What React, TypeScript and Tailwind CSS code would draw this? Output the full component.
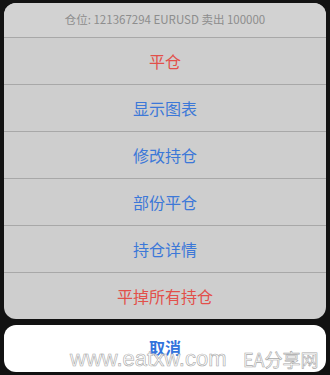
import React from "react";

const actions = [
  { label: "平仓", danger: true },
  { label: "显示图表" },
  { label: "修改持仓" },
  { label: "部份平仓" },
  { label: "持仓详情" },
  { label: "平掉所有持仓", danger: true },
];

export default function App() {
  return (
    <div className="relative h-[375px] w-[330px] overflow-hidden bg-[#121212] px-[4px] pt-[3px] font-['Noto_Sans_CJK_SC',sans-serif]">
      {/* Sheet */}
      <div className="overflow-hidden rounded-[12px] bg-[#cecece]">
        <div className="flex h-[34px] items-center justify-center bg-[#d2d2d2] text-[11.5px] text-[#8d8d8d]">
          仓位: 121367294 EURUSD 卖出 100000
        </div>
        {actions.map((a) => (
          <button
            key={a.label}
            className={[
              "flex h-[47px] w-full items-center justify-center border-t border-[#a8a8a8] text-[16px]",
              a.danger ? "text-[#e2504a]" : "text-[#3c78d8]",
            ].join(" ")}
          >
            {a.label}
          </button>
        ))}
      </div>

      {/* Cancel */}
      <button className="mt-[6px] flex h-[47px] w-full items-center justify-center rounded-[12px] bg-white pb-[3px] text-[16px] font-semibold text-[#3273dc]">
        取消
      </button>

      {/* watermark */}
      <span className="pointer-events-none absolute left-[70px] top-[348px] font-['Liberation_Sans',sans-serif] text-[22px] leading-none text-white/90 [-webkit-text-stroke:0.6px_#a8a8a8]">
        www.eatxw.com
      </span>
      <span className="pointer-events-none absolute left-[243px] top-[350px] text-[18px] leading-none text-white/90 [-webkit-text-stroke:0.6px_#a8a8a8]">
        EA分享网
      </span>
    </div>
  );
}
